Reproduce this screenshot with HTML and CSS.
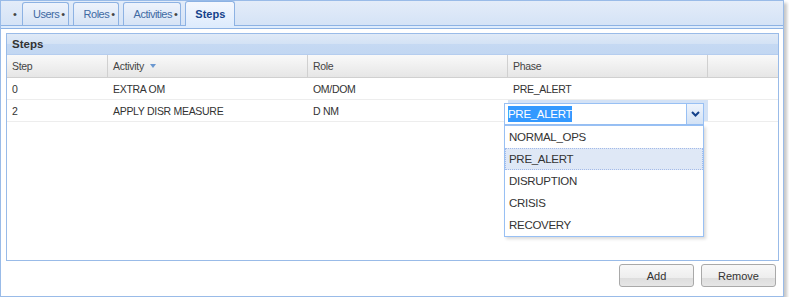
FILE: index.html
```html
<!DOCTYPE html>
<html lang="en">

<head>
  <meta charset="UTF-8" />
  <meta name="viewport" content="width=device-width, initial-scale=1.0" />
  <title>Steps</title>
  <link rel="stylesheet" href="styles.css">
</head>

<body>
  <div class="window">
    <div class="tab-strip">
      <span class="tab-lead">•</span>
      <div class="tab">Users<span class="dot">•</span></div>
      <div class="tab">Roles<span class="dot">•</span></div>
      <div class="tab">Activities<span class="dot">•</span></div>
      <div class="tab active">Steps</div>
    </div>
    <div class="tab-spacer"></div>

    <div class="window-body">
      <div class="panel">
        <div class="panel-header">Steps</div>
        <div class="grid">
          <div class="grid-row grid-head">
            <div class="cell">Step</div>
            <div class="cell">Activity<span class="sort-arrow"></span></div>
            <div class="cell">Role</div>
            <div class="cell">Phase</div>
            <div class="cell filler"></div>
          </div>
          <div class="grid-row">
            <div class="cell">0</div>
            <div class="cell">EXTRA OM</div>
            <div class="cell">OM/DOM</div>
            <div class="cell">PRE_ALERT</div>
            <div class="cell"></div>
          </div>
          <div class="grid-row">
            <div class="cell">2</div>
            <div class="cell">APPLY DISR MEASURE</div>
            <div class="cell">D NM</div>
            <div class="cell editing">
              <div class="combo">
                <div class="combo-input"><span class="selected-text">PRE_ALERT</span></div>
                <div class="combo-trigger">
                  <svg width="9" height="6" viewBox="0 0 9 6">
                    <polyline points="1,1 4.5,4.5 8,1" fill="none" stroke="#15428b" stroke-width="2" />
                  </svg>
                </div>
              </div>
              <ul class="combo-list">
                <li>NORMAL_OPS</li>
                <li class="current">PRE_ALERT</li>
                <li>DISRUPTION</li>
                <li>CRISIS</li>
                <li>RECOVERY</li>
              </ul>
            </div>
            <div class="cell"></div>
          </div>
        </div>
      </div>

      <div class="toolbar">
        <button class="btn">Add</button>
        <button class="btn">Remove</button>
      </div>
    </div>
  </div>
</body>

</html>
```

FILE: styles.css
```css
* {
  box-sizing: border-box;
}

body {
  margin: 0;
  background: #fff;
  font-family: "Liberation Sans", Arial, sans-serif;
  font-size: 10.5px;
  letter-spacing: -0.3px;
  color: #333;
}

.window {
  width: 784px;
  height: 297px;
  border: 1px solid #99bbe8;
  background: #fff;
  box-shadow: 3px 3px 3px rgba(0, 0, 0, 0.22);
  display: flex;
  flex-direction: column;
}

/* tabs */
.tab-strip {
  height: 25px;
  display: flex;
  align-items: flex-end;
  background: linear-gradient(#e3ecf9, #d5e3f6);
  border-bottom: 1px solid #8db2e3;
}

.tab-lead {
  width: 21px;
  height: 23px;
  padding-left: 12px;
  display: flex;
  align-items: center;
  color: #444;
  font-size: 11px;
}

.tab {
  height: 23px;
  margin-right: 4px;
  padding: 0 3px 0 10px;
  display: flex;
  align-items: center;
  border: 1px solid #8db2e3;
  border-bottom: none;
  border-radius: 3px 3px 0 0;
  background: linear-gradient(#eef3fc, #d6e3f5);
  color: #416aa3;
  font-size: 11px;
  letter-spacing: -0.5px;
}

.tab .dot {
  margin-left: 2px;
  color: #444;
}

.tab.active {
  height: 25px;
  margin-bottom: -1px;
  padding: 0 9px;
  background: linear-gradient(#f5f8fe, #deecfd);
  color: #15428b;
  font-weight: bold;
  letter-spacing: 0;
}

.tab-spacer {
  height: 3px;
  background: #deecfd;
  border-bottom: 1px solid #8db2e3;
}

/* body */
.window-body {
  flex: 1;
  padding: 4px 4px 0 5px;
  display: flex;
  flex-direction: column;
}

.panel {
  height: 228px;
  border: 1px solid #99bbe8;
  display: flex;
  flex-direction: column;
}

.panel-header {
  height: 21px;
  padding-left: 5px;
  display: flex;
  align-items: center;
  background: linear-gradient(#e0eaf7 0, #d3e2f5 50%, #c5d9f3 51%, #c2d7f2 100%);
  border-bottom: 1px solid #b5cdef;
  font-size: 11.5px;
  font-weight: bold;
  letter-spacing: 0;
  color: #333;
}

.grid {
  flex: 1;
}

.grid-row {
  display: grid;
  grid-template-columns: 101px 200px 200px 200px 1fr;
  height: 22px;
  border-bottom: 1px solid #ededed;
}

.grid-head {
  height: 23px;
  background: linear-gradient(#f9f9f9, #e6e6e6);
  border-bottom: 1px solid #d0d0d0;
  color: #444;
}

.grid-head .cell {
  border-right: 1px solid #d0d0d0;
}

.grid-head .cell.filler {
  border-right: none;
}

.cell {
  padding-left: 5px;
  display: flex;
  align-items: center;
  white-space: nowrap;
}

.sort-arrow {
  margin-left: 6px;
  width: 0;
  height: 0;
  border-left: 3px solid transparent;
  border-right: 3px solid transparent;
  border-top: 4px solid #6a97d0;
}

/* combo editor */
.cell.editing {
  position: relative;
  background: #d3e2f6;
}

.combo {
  position: absolute;
  left: -4px;
  top: 3px;
  width: 200px;
  height: 22px;
  display: flex;
  border: 1px solid #98c0f4;
  background: #fff;
}

.combo-input {
  flex: 1;
  padding-left: 3px;
  display: flex;
  align-items: center;
  font-size: 11.5px;
}

.selected-text {
  background: #3399ff;
  color: #fff;
  line-height: 16px;
}

.combo-trigger {
  width: 17px;
  border-left: 1px solid #98c0f4;
  background: linear-gradient(#eef4fd, #d3e2f5);
  display: flex;
  align-items: center;
  justify-content: center;
}

.combo-list {
  position: absolute;
  left: -4px;
  top: 25px;
  width: 200px;
  margin: 0;
  padding: 0;
  list-style: none;
  background: #fff;
  border: 1px solid #98c0f4;
  box-shadow: 2px 2px 3px rgba(0, 0, 0, 0.15);
  z-index: 2;
}

.combo-list li {
  height: 22px;
  padding-left: 3px;
  display: flex;
  align-items: center;
  border: 1px solid transparent;
  font-size: 11.5px;
  color: #333;
}

.combo-list li.current {
  background: #dfe8f6;
  border: 1px dotted #a3bae9;
}

/* buttons */
.toolbar {
  margin-top: 3px;
  padding-right: 3px;
  display: flex;
  justify-content: flex-end;
  gap: 7px;
}

.btn {
  width: 75px;
  height: 23px;
  padding: 0;
  appearance: none;
  border: 1px solid #a9a9a9;
  border-radius: 3px;
  background: linear-gradient(#f8f8f8 0, #eeeeee 60%, #dddddd 61%, #e6e6e6 100%);
  font-family: "Liberation Sans", Arial, sans-serif;
  font-size: 11px;
  color: #333;
  cursor: pointer;
}
```
